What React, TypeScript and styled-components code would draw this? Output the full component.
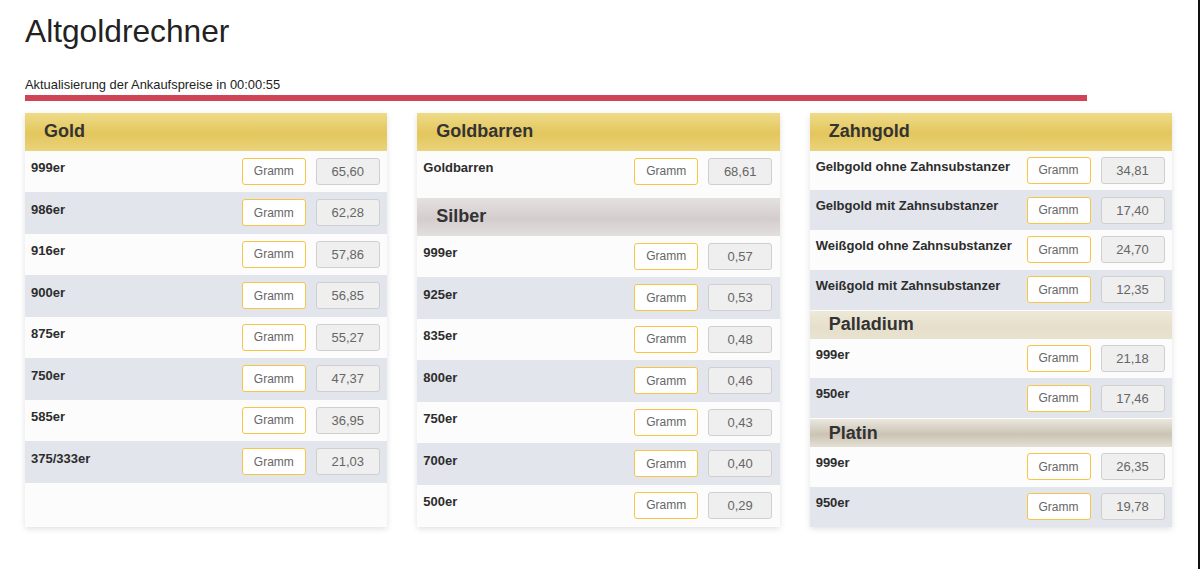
import React from "react";
import styled, { createGlobalStyle, css } from "styled-components";

const GlobalStyle = createGlobalStyle`
  html, body { margin: 0; padding: 0; background: #ffffff; }
  body { font-family: "Liberation Sans", Arial, sans-serif; color: #222; }
  * { box-sizing: border-box; }
`;

type Row = { label: string; value: string };
type Variant = "gold" | "silver" | "palladium" | "platin";
type Section = { title: string; variant: Variant; rows: Row[]; dense?: boolean; spaced?: boolean };

const columns: Section[][] = [
  [
    {
      title: "Gold",
      variant: "gold",
      rows: [
        { label: "999er", value: "65,60" },
        { label: "986er", value: "62,28" },
        { label: "916er", value: "57,86" },
        { label: "900er", value: "56,85" },
        { label: "875er", value: "55,27" },
        { label: "750er", value: "47,37" },
        { label: "585er", value: "36,95" },
        { label: "375/333er", value: "21,03" },
      ],
    },
  ],
  [
    { title: "Goldbarren", variant: "gold", spaced: true, rows: [{ label: "Goldbarren", value: "68,61" }] },
    {
      title: "Silber",
      variant: "silver",
      rows: [
        { label: "999er", value: "0,57" },
        { label: "925er", value: "0,53" },
        { label: "835er", value: "0,48" },
        { label: "800er", value: "0,46" },
        { label: "750er", value: "0,43" },
        { label: "700er", value: "0,40" },
        { label: "500er", value: "0,29" },
      ],
    },
  ],
  [
    {
      title: "Zahngold",
      variant: "gold",
      dense: true,
      rows: [
        { label: "Gelbgold ohne Zahnsubstanzer", value: "34,81" },
        { label: "Gelbgold mit Zahnsubstanzer", value: "17,40" },
        { label: "Weißgold ohne Zahnsubstanzer", value: "24,70" },
        { label: "Weißgold mit Zahnsubstanzer", value: "12,35" },
      ],
    },
    {
      title: "Palladium",
      variant: "palladium",
      dense: true,
      rows: [
        { label: "999er", value: "21,18" },
        { label: "950er", value: "17,46" },
      ],
    },
    {
      title: "Platin",
      variant: "platin",
      dense: true,
      rows: [
        { label: "999er", value: "26,35" },
        { label: "950er", value: "19,78" },
      ],
    },
  ],
];

const Page = styled.div`
  min-height: 100vh;
  padding: 13px 26px 0 25px;
  border-right: 2px solid #111;
`;

const Title = styled.h1`
  margin: 0;
  font-size: 31.7px;
  line-height: 36px;
  font-weight: 400;
  color: #222;
`;

const Countdown = styled.p`
  margin: 27.5px 0 0;
  font-size: 12.9px;
  line-height: 15px;
  color: #222;
`;

const Progress = styled.div`
  margin-top: 3px;
  height: 6px;
  background: #d04555;
`;

const Grid = styled.div`
  margin-top: 12px;
  display: grid;
  grid-template-columns: repeat(3, 1fr);
  column-gap: 30px;
  align-items: stretch;
`;

const Card = styled.div`
  background: #fcfcfc;
  box-shadow: 0 2px 6px rgba(0, 0, 0, 0.12);
  display: flex;
  flex-direction: column;
`;

const headerBg: Record<Variant, string> = {
  gold: "linear-gradient(to bottom, #eedb88 0%, #e3c65c 55%, #ead37d 100%)",
  silver: "linear-gradient(to bottom, #e5e1e1 0%, #d4cdcd 55%, #e3dfdf 100%)",
  palladium: "linear-gradient(to bottom, #ede8d8 0%, #e6dfcb 60%, #e8e2d0 100%)",
  platin: "linear-gradient(to bottom, #ebe7de 0%, #cbc4b5 55%, #e4dfd4 100%)",
};

const Header = styled.div<{ $variant: Variant; $small?: boolean }>`
  display: flex;
  align-items: center;
  padding-left: 19px;
  height: ${(p) => (p.$small ? "28px" : "38px")};
  background: ${(p) => headerBg[p.$variant]};
  font-size: 18px;
  font-weight: 700;
  color: #333;
  ${(p) =>
    p.$small &&
    css`
      margin-top: 1px;
    `}
`;

const SectionBody = styled.div<{ $spaced?: boolean }>`
  padding-bottom: ${(p) => (p.$spaced ? "5.5px" : "0")};
`;

const ItemRow = styled.div<{ $odd: boolean; $dense?: boolean }>`
  display: flex;
  align-items: center;
  gap: 10px;
  height: ${(p) => (p.$dense ? "39.75px" : "41.5px")};
  padding: 0 7.5px 0 6px;
  background: ${(p) => (p.$odd ? "#e2e5ec" : "#fcfcfc")};
`;

const Label = styled.span<{ $dense?: boolean }>`
  flex: 1;
  align-self: flex-start;
  padding-top: ${(p) => (p.$dense ? "8px" : "9.5px")};
  font-size: 13px;
  line-height: 15px;
  font-weight: 700;
  color: #2d2d2d;
  white-space: nowrap;
`;

const UnitButton = styled.button`
  width: 64px;
  height: 27px;
  padding: 0;
  background: #ffffff;
  border: 1px solid #f6c544;
  border-radius: 3px;
  font-family: "Liberation Sans", Arial, sans-serif;
  font-size: 12px;
  color: #666;
`;

const Value = styled.span`
  width: 64px;
  height: 27px;
  display: flex;
  align-items: center;
  justify-content: center;
  background: #efefef;
  border: 1px solid #cfcfcf;
  border-radius: 3px;
  font-size: 13px;
  color: #666;
`;

export default function App() {
  return (
    <>
      <GlobalStyle />
      <Page>
        <Title>Altgoldrechner</Title>
        <Countdown>Aktualisierung der Ankaufspreise in 00:00:55</Countdown>
        <Progress style={{ width: "92.6%" }} />
        <Grid>
          {columns.map((sections, ci) => (
            <Card key={ci}>
              {sections.map((s) => (
                <React.Fragment key={s.title}>
                  <Header $variant={s.variant} $small={s.variant === "palladium" || s.variant === "platin"}>
                    {s.title}
                  </Header>
                  <SectionBody $spaced={s.spaced}>
                    {s.rows.map((r, ri) => (
                      <ItemRow key={ri} $odd={ri % 2 === 1} $dense={s.dense}>
                        <Label $dense={s.dense}>{r.label}</Label>
                        <UnitButton type="button">Gramm</UnitButton>
                        <Value>{r.value}</Value>
                      </ItemRow>
                    ))}
                  </SectionBody>
                </React.Fragment>
              ))}
            </Card>
          ))}
        </Grid>
      </Page>
    </>
  );
}
